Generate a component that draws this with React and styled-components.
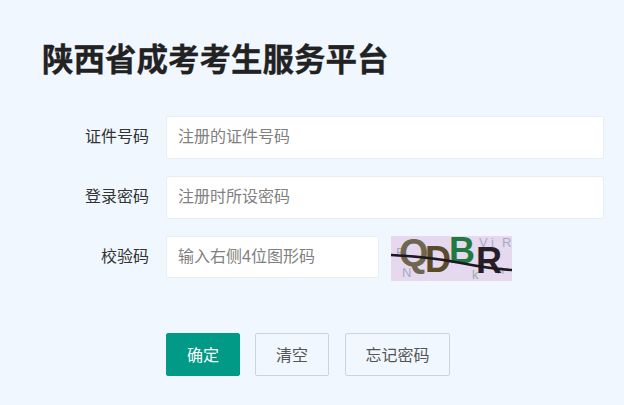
import React from 'react'
import styled, { createGlobalStyle } from 'styled-components'

const GlobalStyle = createGlobalStyle`
  html, body {
    margin: 0;
    padding: 0;
    background: #f0f7ff;
  }
  body {
    font-family: "Liberation Sans", "Noto Sans CJK SC", sans-serif;
  }
  * {
    box-sizing: border-box;
  }
`

function Captcha() {
  return (
    <CaptchaBox viewBox="0 0 121 45" width="121" height="45">
      <rect x="0" y="0" width="121" height="45" fill="#e6d8ee" />
      <g fontFamily="'Liberation Sans', sans-serif" fontSize="13" fill="#a3abc4">
        <text x="5" y="21">F</text>
        <text x="11" y="41">N</text>
        <text x="88" y="11">V</text>
        <text x="100" y="11">i</text>
        <text x="111" y="11">R</text>
        <text x="81" y="43" fill="#8fb0a8">k</text>
        <text x="106" y="38">n</text>
      </g>
      <g fontFamily="'Liberation Sans', sans-serif" fontWeight="700">
        <text x="8" y="30" fontSize="38" fill="#6f6652">Q</text>
        <text x="34" y="36" fontSize="36" fill="#5c4b2b">D</text>
        <text x="58" y="27" fontSize="36" fill="#1f7a40">B</text>
        <text x="85" y="37" fontSize="36" fill="#2a1e26">R</text>
      </g>
      <path d="M0 19 Q40 21 70 27 T121 34" stroke="#1c1820" strokeWidth="2.6" fill="none" />
    </CaptchaBox>
  )
}

export default function App() {
  return (
    <>
      <GlobalStyle />
      <Page>
        <Title>陕西省成考考生服务平台</Title>
        <Form>
          <Row>
            <Label>证件号码</Label>
            <Input placeholder="注册的证件号码" />
          </Row>
          <Row>
            <Label>登录密码</Label>
            <Input placeholder="注册时所设密码" />
          </Row>
          <Row>
            <Label>校验码</Label>
            <Input $short placeholder="输入右侧4位图形码" />
            <Captcha />
          </Row>
        </Form>
        <Actions>
          <Button $primary>确定</Button>
          <Button>清空</Button>
          <Button $wide>忘记密码</Button>
        </Actions>
      </Page>
    </>
  )
}

const Page = styled.div`
  width: 624px;
  height: 405px;
  padding: 41px 20px 0 42px;
  overflow: hidden;
  background: #f0f7ff;
`
const Title = styled.h1`
  margin: 0;
  height: 39px;
  font-size: 31.5px;
  line-height: 39px;
  font-weight: 700;
  color: #222;
  -webkit-text-stroke: 0.3px #222;
`
const Form = styled.div`
  margin-top: 36px;
  display: flex;
  flex-direction: column;
  gap: 17px;
`
const Row = styled.div`
  display: flex;
  align-items: flex-start;
`
const Label = styled.label`
  width: 107px;
  height: 43px;
  line-height: 42px;
  text-align: right;
  font-size: 16px;
  color: #333;
`
const Input = styled.input`
  margin-left: 17px;
  width: ${(p) => (p.$short ? '213px' : '438px')};
  height: ${(p) => (p.$short ? '42px' : '43px')};
  padding: 0 11px 1px;
  border: 1px solid #e9eef3;
  border-radius: 2px;
  background: #fff;
  font-family: inherit;
  font-size: 16px;
  color: #333;
  outline: none;
  &::placeholder {
    color: #808080;
    opacity: 1;
  }
`
const CaptchaBox = styled.svg`
  display: block;
  margin-left: 12px;
  flex: none;
`
const Actions = styled.div`
  margin: 52px 0 0 124px;
  display: flex;
  gap: 15px;
`
const Button = styled.button`
  width: ${(p) => (p.$wide ? '105px' : '74px')};
  height: 43px;
  margin-left: ${(p) => (p.$wide ? '1px' : '0')};
  padding: 0 0 2px;
  border: 1px solid ${(p) => (p.$primary ? '#009a87' : '#cdd5dc')};
  border-radius: 2px;
  background: ${(p) => (p.$primary ? '#009a87' : 'transparent')};
  color: ${(p) => (p.$primary ? '#fff' : '#555')};
  font-family: inherit;
  font-size: 16px;
`
